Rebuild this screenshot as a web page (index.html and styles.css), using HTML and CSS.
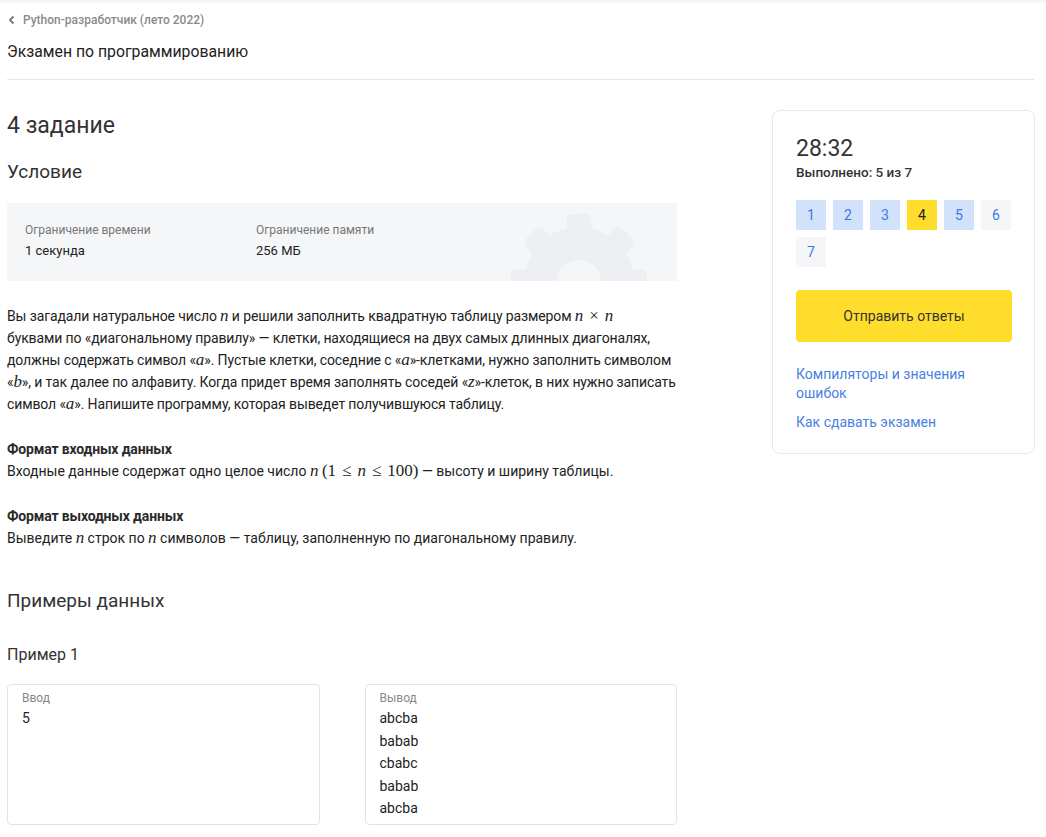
FILE: index.html
```html
<!DOCTYPE html>
<html lang="ru">
<head>
<meta charset="utf-8">
<link rel="stylesheet" href="styles.css">
</head>
<body>
<div class="page">
  <header class="top">
    <a class="crumb" href="#"><svg class="chev" width="8" height="10" viewBox="0 0 8 10"><path d="M5.5 1.5 L2 5 L5.5 8.5" fill="none" stroke="#777" stroke-width="1.8"/></svg>Python-разработчик (лето 2022)</a>
    <h1 class="exam">Экзамен по программированию</h1>
  </header>
  <div class="layout">
    <main class="main">
      <h2 class="task">4 задание</h2>
      <h3 class="sub">Условие</h3>
      <div class="limits">
        <div class="limit"><div class="lbl">Ограничение времени</div><div class="val">1 секунда</div></div>
        <div class="limit"><div class="lbl">Ограничение памяти</div><div class="val">256 МБ</div></div>
        <svg class="gear" width="150" height="150" viewBox="-75 -75 150 150">
          <g fill="#eeeff2">
            <circle r="55"/>
            <rect x="-12.5" y="-68" width="25" height="24" rx="5"/>
            <rect x="-12.5" y="-68" width="25" height="24" rx="5" transform="rotate(45)"/>
            <rect x="-12.5" y="-68" width="25" height="24" rx="5" transform="rotate(90)"/>
            <rect x="-12.5" y="-68" width="25" height="24" rx="5" transform="rotate(135)"/>
            <rect x="-12.5" y="-68" width="25" height="24" rx="5" transform="rotate(180)"/>
            <rect x="-12.5" y="-68" width="25" height="24" rx="5" transform="rotate(225)"/>
            <rect x="-12.5" y="-68" width="25" height="24" rx="5" transform="rotate(270)"/>
            <rect x="-12.5" y="-68" width="25" height="24" rx="5" transform="rotate(315)"/>
          </g>
          <circle r="22" fill="#f5f6f8"/>
        </svg>
      </div>
      <div class="statement">
        <p class="lines">Вы загадали натуральное число <i class="m">n</i> и решили заполнить квадратную таблицу размером <span class="expr"><i class="m">n</i><span class="mo op">×</span><i class="m">n</i></span><br>буквами по «диагональному правилу» — клетки, находящиеся на двух самых длинных диагоналях,<br>должны содержать символ «<i class="m">a</i>». Пустые клетки, соседние с «<i class="m">a</i>»-клетками, нужно заполнить символом<br>«<i class="m">b</i>», и так далее по алфавиту. Когда придет время заполнять соседей «<i class="m">z</i>»-клеток, в них нужно записать<br>символ «<i class="m">a</i>». Напишите программу, которая выведет получившуюся таблицу.</p>
        <h4 class="fmt">Формат входных данных</h4>
        <p>Входные данные содержат одно целое число <i class="m">n</i> <span class="mo">(1<span class="op">≤</span><i>n</i><span class="op">≤</span>100)</span> — высоту и ширину таблицы.</p>
        <h4 class="fmt">Формат выходных данных</h4>
        <p>Выведите <i class="m">n</i> строк по <i class="m">n</i> символов — таблицу, заполненную по диагональному правилу.</p>
      </div>
      <h3 class="examples">Примеры данных</h3>
      <h4 class="ex">Пример 1</h4>
      <div class="samples">
        <div class="sample"><div class="slbl">Ввод</div><pre class="code">5</pre></div>
        <div class="sample"><div class="slbl">Вывод</div><pre class="code">abcba
babab
cbabc
babab
abcba</pre></div>
      </div>
    </main>
    <aside class="side">
      <div class="card">
        <div class="timer">28:32</div>
        <div class="done">Выполнено: 5 из 7</div>
        <div class="tasks">
          <a class="t ok" href="#">1</a>
          <a class="t ok" href="#">2</a>
          <a class="t ok" href="#">3</a>
          <a class="t cur" href="#">4</a>
          <a class="t ok" href="#">5</a>
          <a class="t" href="#">6</a>
          <a class="t" href="#">7</a>
        </div>
        <button class="send">Отправить ответы</button>
        <a class="link" href="#">Компиляторы и значения ошибок</a>
        <a class="link" href="#">Как сдавать экзамен</a>
      </div>
    </aside>
  </div>
</div>
</body>
</html>
```
FILE: styles.css
```css
* { box-sizing: border-box; }
html, body { margin: 0; padding: 0; background: #fff; }
body {
  font-family: Roboto, "Liberation Sans", sans-serif;
  color: #222;
  background: linear-gradient(#f2f2f2, #fff 4px);
}
.page { padding: 0 12px 0 7px; }
.top { padding-top: 12px; border-bottom: 1px solid #e6e6e6; padding-bottom: 17px; }
.crumb {
  display: flex; align-items: center; gap: 7px;
  font-size: 12px; font-weight: 500; color: #8a8a8a; text-decoration: none;
  line-height: 16px;
}
.chev { margin-left: 1px; }
.exam { margin: 13px 0 0; font-size: 15.8px; font-weight: 400; line-height: 21px; color: #222; }
.layout { display: flex; gap: 95px; padding-top: 30px; align-items: flex-start; }
.main { width: 670px; flex: none; }
.side { width: 263px; flex: none; }
.task { margin: 2px 0 0; font-size: 23px; font-weight: 400; line-height: 28px; color: #333; }
.sub { margin: 20px 0 0; font-size: 19px; font-weight: 400; line-height: 24px; color: #333; }
.limits {
  position: relative; overflow: hidden;
  margin-top: 19px; height: 78px; background: #f5f6f8;
  display: flex; padding: 19px 18px 0;
}
.limit { width: 231px; position: relative; z-index: 1; }
.lbl { font-size: 12px; color: #777; line-height: 16px; }
.val { font-size: 13px; color: #222; line-height: 18px; margin-top: 4px; }
.gear { position: absolute; left: 497px; top: 4px; }
.statement { margin-top: 24px; font-size: 14px; line-height: 22px; color: #222; }
.statement p { margin: 0; }
.statement .lines { white-space: nowrap; letter-spacing: -0.12px; }
.m { font-family: "Liberation Serif", serif; font-style: italic; font-size: 17px; line-height: 1; }
.mo { font-family: "Liberation Serif", serif; font-size: 17px; line-height: 1; }
.op { margin: 0 6px; }
.expr { white-space: nowrap; }
.fmt { margin: 23px 0 0; font-size: 14px; font-weight: 700; letter-spacing: -0.15px; line-height: 22px; color: #2a2a2a; }
.examples { margin: 40px 0 0; font-size: 19px; font-weight: 400; line-height: 24px; color: #333; }
.ex { margin: 31px 0 0; font-size: 16px; font-weight: 400; line-height: 22px; color: #333; }
.samples { display: flex; gap: 45px; margin-top: 18px; }
.sample {
  flex: 1; border: 1px solid #e3e3e3; border-radius: 4px;
  padding: 5px 14px 8px; height: 141px;
}
.slbl { font-size: 12px; color: #888; line-height: 16px; }
.code { margin: 1px 0 0; font-family: Roboto, "Liberation Sans", sans-serif; font-size: 14px; line-height: 22.5px; color: #222; }
.card {
  border: 1px solid #e8e8e8; border-radius: 8px;
  padding: 24px 22px 20px 23px; height: 344px;
}
.timer { font-size: 23px; line-height: 28px; color: #333; }
.done { font-size: 13.5px; font-weight: 500; line-height: 18px; margin-top: 0; color: #333; }
.tasks { display: flex; flex-wrap: wrap; gap: 7px; margin-top: 19px; width: 225px; }
.t {
  width: 30px; height: 30px; display: flex; align-items: center; justify-content: center;
  font-size: 14px; color: #3d78e8; background: #f5f6f8; text-decoration: none;
}
.t.ok { background: #d2e2fa; }
.t.cur { background: #ffdd2d; color: #222; }
.send {
  display: block; width: 216px; height: 52px; margin-top: 23px;
  background: #ffdd2d; border: none; border-radius: 4px;
  font-family: inherit; font-size: 14px; color: #333;
}
.link {
  display: block; margin-top: 23px; font-size: 14px; line-height: 19px;
  color: #4a7fe3; text-decoration: none; width: 190px;
}
.link + .link { margin-top: 10px; }
```
